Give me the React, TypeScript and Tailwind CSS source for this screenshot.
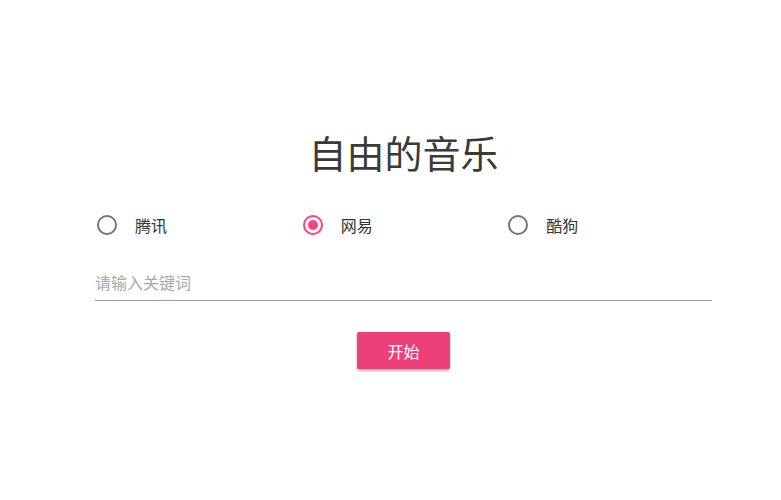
import { useState } from "react";

const sources = [
  { id: "qq", label: "腾讯" },
  { id: "netease", label: "网易" },
  { id: "kugou", label: "酷狗" },
];

export default function App() {
  const [source, setSource] = useState("netease");

  return (
    <div
      className="w-[781px] h-[500px] bg-white text-[#333]"
      style={{ fontFamily: '"Noto Sans CJK SC", "Noto Sans", sans-serif' }}
    >
      <div className="ml-[95px] w-[617px] pt-[124px]">
        <h1 className="h-[56px] leading-[56px] text-center text-[38px] font-normal text-[#3a3a3a]">
          自由的音乐
        </h1>

        <div className="mt-[33px] grid grid-cols-3">
          {sources.map((s) => {
            const checked = s.id === source;
            return (
              <label
                key={s.id}
                className="flex items-center h-[24px] cursor-pointer"
                onClick={() => setSource(s.id)}
              >
                <span
                  className={
                    checked
                      ? "ml-[2px] w-[20px] h-[20px] rounded-full border-2 border-[#ff4081] flex items-center justify-center"
                      : "ml-[2px] w-[20px] h-[20px] rounded-full border-2 border-[#757575] flex items-center justify-center"
                  }
                >
                  {checked && <span className="w-[10px] h-[10px] rounded-full bg-[#ff4081]" />}
                </span>
                <span className="ml-[18px] text-[16px] text-[#333]">{s.label}</span>
              </label>
            );
          })}
        </div>

        <div className="mt-[30px] h-[34px] pb-[4px] border-b border-[#9e9e9e] flex items-center">
          <input
            className="w-full h-full outline-none bg-transparent text-[16px] text-[#333] placeholder:text-[#a9a9a9]"
            placeholder="请输入关键词"
          />
        </div>

        <div className="mt-[31px] flex justify-center">
          <button className="w-[93px] h-[37px] rounded-[2px] bg-[#ec407a] text-white text-[16px] shadow-[0_2px_3px_rgba(0,0,0,0.3)]">
            开始
          </button>
        </div>
      </div>
    </div>
  );
}
